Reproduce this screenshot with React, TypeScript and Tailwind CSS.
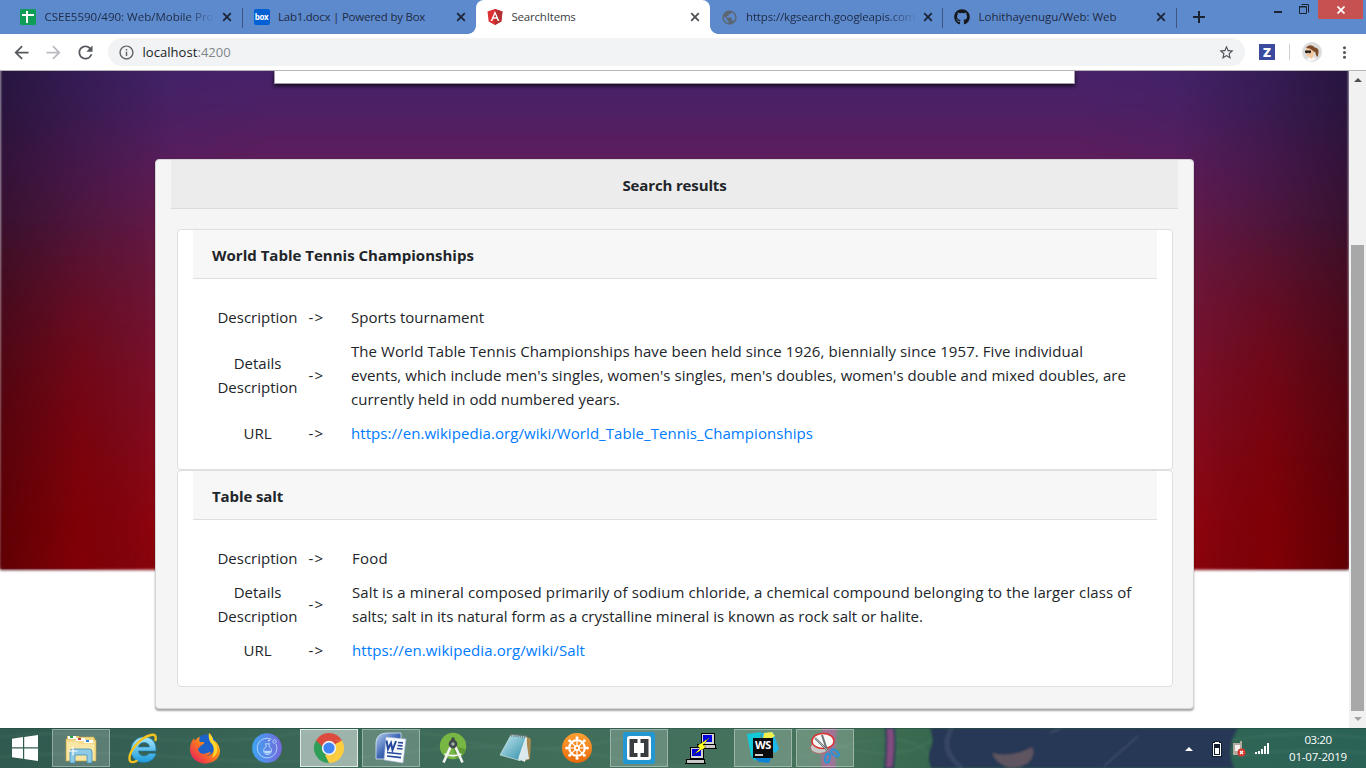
import React from "react";
import {
  MdArrowBack,
  MdArrowForward,
  MdRefresh,
  MdInfoOutline,
  MdStarBorder,
  MdMoreVert,
  MdPublic,
} from "react-icons/md";
import { FaGithub } from "react-icons/fa";

/* ---------- Browser tabs ---------- */

function CloseX({ className = "text-[#1f2a3c]" }: { className?: string }) {
  return (
    <svg viewBox="0 0 10 10" className={"size-[10px] shrink-0 " + className} stroke="currentColor" strokeWidth="1.8">
      <path d="M1.2 1.2 8.8 8.8M8.8 1.2 1.2 8.8" />
    </svg>
  );
}

function SheetsIcon() {
  return (
    <svg viewBox="0 0 16 16" className="size-4 shrink-0">
      <rect width="16" height="16" rx="1.2" fill="#0f9d58" />
      <path d="M2 6h12M7 2v12" stroke="#fff" strokeWidth="2" />
    </svg>
  );
}

function BoxIcon() {
  return (
    <span className="flex h-4 w-4 shrink-0 items-center justify-center rounded-[2px] bg-[#0061d5] font-['Open_Sans',sans-serif] text-[8px] leading-none font-bold tracking-[-0.3px] text-white">
      box
    </span>
  );
}

function AngularIcon() {
  return (
    <svg viewBox="0 0 16 16" className="size-4 shrink-0">
      <path d="M8 0 15.5 2.6 14.3 12.4 8 16 1.7 12.4.5 2.6Z" fill="#dd3136" />
      <path d="M8 0 15.5 2.6 14.3 12.4 8 16Z" fill="#b52e31" />
      <path d="M8 2 3.6 12h1.7l.9-2.3h3.6l.9 2.3h1.7ZM8 5l1.2 3.2H6.8Z" fill="#fff" fillRule="evenodd" />
    </svg>
  );
}

type TabProps = {
  icon: React.ReactNode;
  title: string;
  titleClass: string;
  active?: boolean;
  divider?: boolean;
};

function Tab({ icon, title, titleClass, active, divider }: TabProps) {
  return (
    <div
      className={
        "relative flex h-[34px] w-[233.5px] shrink-0 items-center pl-[11px] " +
        (active ? "rounded-t-[8px] bg-white pr-[9.5px]" : "pr-[10.5px]")
      }
    >
      {active && (
        <>
          <span className="absolute bottom-0 -left-2 h-2 w-2 bg-[radial-gradient(circle_at_0_0,transparent_7.5px,#fff_8px)]" />
          <span className="absolute -right-2 bottom-0 h-2 w-2 bg-[radial-gradient(circle_at_100%_0,transparent_7.5px,#fff_8px)]" />
        </>
      )}
      {icon}
      <span
        className={
          "-mr-1 ml-[8.5px] min-w-0 flex-1 overflow-hidden text-[11.5px] leading-4 whitespace-nowrap " +
          titleClass +
          (active ? " text-[#3c4043]" : " text-[#1d2b44]")
        }
      >
        {title}
      </span>
      <span className="flex w-5 justify-end">
        <CloseX className={active ? "text-[#4b4f54]" : "text-[#1b2536]"} />
      </span>
      {divider && <span className="absolute top-2 right-0 h-5 w-px bg-[#3c5581]" />}
    </div>
  );
}

function TabStrip() {
  return (
    <div className="flex h-[34px] bg-[#5d89cd] pl-[9px]">
      <Tab
        icon={<SheetsIcon />}
        title="CSEE5590/490: Web/Mobile Pro"
        titleClass="[mask-image:linear-gradient(to_right,#000_83%,transparent_99%)]"
        divider
      />
      <Tab icon={<BoxIcon />} title="Lab1.docx | Powered by Box" titleClass="tracking-[-0.24px]" />
      <Tab icon={<AngularIcon />} title="SearchItems" titleClass="tracking-[-0.2px]" active />
      <Tab
        icon={<MdPublic className="size-[17px] shrink-0 text-[#5c6670]" />}
        title="https://kgsearch.googleapis.com"
        titleClass="tracking-[-0.14px] [mask-image:linear-gradient(to_right,#000_83%,transparent_100%)]"
        divider
      />
      <Tab
        icon={<FaGithub className="size-4 shrink-0 text-[#15181c]" />}
        title="Lohithayenugu/Web: Web"
        titleClass="tracking-[-0.02px]"
        divider
      />
      <svg viewBox="0 0 12 12" className="mt-[11px] ml-4 size-3 shrink-0" stroke="#1b2230" strokeWidth="2">
        <path d="M6 0v12M0 6h12" />
      </svg>
      <div className="ml-auto flex h-[19px] shrink-0 pr-[3px]">
        <svg viewBox="0 0 50 19" className="h-[19px] w-[50px]" fill="none" stroke="#1b2230">
          <path d="M6 12h8" strokeWidth="2" />
          <path d="M31.5 6.5h7v7h-7zM31 7h8" />
          <path d="M33.5 4.5h7v8" />
        </svg>
        <div className="flex w-[45px] items-center justify-center bg-[#c75050]">
          <svg viewBox="0 0 8 8" className="size-2" stroke="#fff" strokeWidth="1.8">
            <path d="M.5.5l7 7M7.5.5l-7 7" />
          </svg>
        </div>
      </div>
    </div>
  );
}

/* ---------- Address bar ---------- */

function Avatar() {
  return (
    <svg viewBox="0 0 20 20" className="size-5">
      <circle cx="10" cy="10" r="10" fill="#dcdcdc" />
      <path d="M5 17c2-3 7-3 9 0a9 9 0 0 1-8 2Z" fill="#f8f8f8" />
      <path d="M4 7c0-2 4-3 7-2l1 7-2 5-3-2-2.500-2Z" fill="#f3c79e" />
      <path d="M4 6c2-4 7-3.500 8.500-.5 3 0 4.500 2.500 4 5-.2 2-.5 3-1 4.500-1-1-2-2.500-2-4.500L11 9C9.500 7 7 6 4 6Z" fill="#7d4b29" />
      <path d="M3 8.500h6v2c-1 1.200-2 1-2.500 0-1 1-3 .8-3.500-.2Z" fill="#241e1c" />
    </svg>
  );
}

function Toolbar() {
  return (
    <div className="flex h-9 items-center bg-white pr-[12px] pl-[11px]">
      <MdArrowBack className="size-[21px] shrink-0 text-[#54585d]" />
      <MdArrowForward className="ml-[11px] size-[21px] shrink-0 text-[#b9bbbe]" />
      <MdRefresh className="ml-[11px] size-[21px] shrink-0 text-[#54585d]" />
      <div className="ml-3 flex h-7 w-[1137px] shrink-0 items-center rounded-full bg-[#f1f3f4] pr-[10px] pl-[9.5px]">
        <MdInfoOutline className="size-[17px] text-[#5f6368]" />
        <span className="ml-2 text-[13px] leading-4 tracking-[0.05px] text-[#202124]">
          localhost<span className="text-[#80868b]">:4200</span>
        </span>
        <MdStarBorder className="ml-auto size-[17px] text-[#4f5358]" />
      </div>
      <span className="ml-[14px] flex size-4 items-center justify-center bg-[#3b4a9e] text-[13px] leading-none font-extrabold text-white">
        Z
      </span>
      <span className="ml-[14px] h-4 w-px bg-[#cfd1d4]" />
      <span className="ml-3 size-5">
        <Avatar />
      </span>
      <MdMoreVert className="ml-auto size-[19px] text-[#54585d]" />
    </div>
  );
}

/* ---------- Page ---------- */

type Line = { text: string; tracking: string };
type Result = { title: string; titleTracking: string; indent: string; description: Line; details: Line[]; url: Line };

const results: Result[] = [
  {
    title: "World Table Tennis Championships",
    titleTracking: "tracking-[0.01px]",
    indent: "pl-[21px]",
    description: { text: "Sports tournament", tracking: "tracking-normal" },
    details: [
      {
        text: "The World Table Tennis Championships have been held since 1926, biennially since 1957. Five individual",
        tracking: "tracking-[0.076px]",
      },
      {
        text: "events, which include men's singles, women's singles, men's doubles, women's double and mixed doubles, are",
        tracking: "tracking-[0.052px]",
      },
      { text: "currently held in odd numbered years.", tracking: "tracking-[0.015px]" },
    ],
    url: {
      text: "https://en.wikipedia.org/wiki/World_Table_Tennis_Championships",
      tracking: "tracking-[0.061px]",
    },
  },
  {
    title: "Table salt",
    titleTracking: "tracking-[-0.1px]",
    indent: "pl-[22px]",
    description: { text: "Food", tracking: "tracking-[0.2px]" },
    details: [
      {
        text: "Salt is a mineral composed primarily of sodium chloride, a chemical compound belonging to the larger class of",
        tracking: "tracking-[0.105px]",
      },
      {
        text: "salts; salt in its natural form as a crystalline mineral is known as rock salt or halite.",
        tracking: "tracking-[0.005px]",
      },
    ],
    url: { text: "https://en.wikipedia.org/wiki/Salt", tracking: "tracking-[0.097px]" },
  },
];

function Row({ label, indent, children }: { label: React.ReactNode; indent: string; children: React.ReactNode }) {
  return (
    <div className="flex items-center py-[5px] leading-6">
      <div className="w-[91px] text-center">{label}</div>
      <div className="w-[27px] text-center tracking-[1.3px]">-&gt;</div>
      <div className={"whitespace-nowrap " + indent}>{children}</div>
    </div>
  );
}

function ResultCard({ r }: { r: Result }) {
  return (
    <article className="rounded-[4px] border border-[#dfdfdf] bg-white px-[15px] pb-[19px]">
      <h2
        className={
          "border-b border-[#dfdfdf] bg-[#f7f7f7] px-[19px] pt-[13px] pb-[11px] leading-6 font-bold " + r.titleTracking
        }
      >
        {r.title}
      </h2>
      <div className="pt-[21px] pl-[19px]">
        <Row label="Description" indent={r.indent}>
          <span className={r.description.tracking}>{r.description.text}</span>
        </Row>
        <Row
          label={
            <>
              Details
              <br />
              Description
            </>
          }
          indent={r.indent}
        >
          {r.details.map((l) => (
            <span key={l.text} className={"block " + l.tracking}>
              {l.text}
            </span>
          ))}
        </Row>
        <Row label="URL" indent={r.indent}>
          <a className={"text-[#007bff] " + r.url.tracking}>{r.url.text}</a>
        </Row>
      </div>
    </article>
  );
}

function Page() {
  return (
    <div className="relative min-w-0 flex-1 overflow-hidden bg-white">
      <div className="absolute inset-x-0 -top-10 h-[539px] bg-[linear-gradient(to_right,rgba(0,0,0,.38),rgba(0,0,0,.18)_6%,transparent_13%,transparent_87%,rgba(0,0,0,.18)_94%,rgba(0,0,0,.38)),linear-gradient(to_right,rgba(30,32,90,.22),transparent_20%,transparent_80%,rgba(30,32,90,.22)),linear-gradient(to_bottom,#46226a_7%,#4c2065_14%,#5f1c5a_25%,#74173c_42%,#880f28_60%,#980712_80%,#a00006_92%,#9c0004)] blur-[1.5px]" />
      <div className="absolute inset-x-0 top-[150px] h-[348px] bg-[linear-gradient(to_right,#600004,#820006_6%,transparent_11%,transparent_89%,#820006_94%,#600004)] [mask-image:linear-gradient(to_bottom,transparent,#000)] blur-[1.5px]" />
      <div className="relative flex flex-col items-center">
        <div className="h-[13px] w-[801px] border border-t-0 border-[#a49aab] bg-white shadow-[0_2px_4px_rgba(0,0,0,.75)]" />
        <section className="mt-[75px] h-[550px] w-[1039px] rounded-[4px] border border-[#d5d5d5] bg-[#f5f5f5] px-[15px] shadow-[0_2px_2px_rgba(0,0,0,.35)]">
          <h1 className="border-b border-[#dcdcdc] bg-[#ececec] pt-[13px] pb-[11px] text-center leading-6 font-bold tracking-[-0.14px]">
            Search results
          </h1>
          <div className="pt-5 pr-[5px] pl-[6px]">
            {results.map((r) => (
              <ResultCard key={r.title} r={r} />
            ))}
          </div>
        </section>
      </div>
    </div>
  );
}

function Scrollbar() {
  return (
    <div className="flex w-[17px] shrink-0 flex-col items-center bg-[#f1f1f1]">
      <svg viewBox="0 0 8 4" className="mt-[7px] h-1 w-2">
        <path d="M0 4 4 0l4 4Z" fill="#505050" />
      </svg>
      <div className="mt-[163px] h-[466px] w-[13px] bg-[#a8a8a8]" />
      <svg viewBox="0 0 8 4" className="mt-[6px] h-1 w-2">
        <path d="M0 0h8L4 4Z" fill="#a3a3a3" />
      </svg>
    </div>
  );
}

/* ---------- Taskbar ---------- */

function TaskbarBackdrop() {
  return (
    <svg viewBox="0 0 1366 40" preserveAspectRatio="none" className="absolute inset-0 h-full w-full">
      <defs>
        <linearGradient id="tb" x1="0" x2="1" y1="0" y2="0">
          <stop offset="0" stopColor="#30594f" />
          <stop offset=".28" stopColor="#3c6a58" />
          <stop offset=".5" stopColor="#42705c" />
          <stop offset=".6" stopColor="#46745a" />
          <stop offset=".68" stopColor="#37694f" />
          <stop offset="1" stopColor="#2b6257" />
        </linearGradient>
        <filter id="soft">
          <feGaussianBlur stdDeviation="1.2" />
        </filter>
      </defs>
      <rect width="1366" height="40" fill="url(#tb)" />
      <g filter="url(#soft)">
        <g stroke="#5f8f7a" strokeOpacity=".2" strokeWidth="2" fill="none">
          <path d="M0 9Q60 2 140 10T300 5T460 12T640 6T820 11T940 6M0 29Q90 21 190 30T400 25T620 31T820 24T930 29" />
          <path d="M1230 13q60-12 136-3M1235 29q60-11 131-4" />
        </g>
        <path d="M822 0q0 20-1 40h15q-2-18 1-40Z" fill="#86527c" />
        <path d="M886 0q1 20-1 40h8q3-20 1-40Z" fill="#844b80" stroke="#2a3f58" strokeWidth="2" />
        <path d="M930 0q5 13 0 22-3 8 1 18h303q-3-6-4-16 1-14 8-24Z" fill="#273754" />
        <path d="M952 0q-14 22 10 40" stroke="#566789" strokeWidth="5" fill="none" opacity=".3" />
        <path d="M992 25q20 5 40-6 4 8-4 16-10 6-21 4-11-4-15-14Z" fill="#5e5560" />
        <path d="M1104 38l34-30M1050 5l12-5" stroke="#3a4966" strokeWidth="2" />
      </g>
      <path d="M0 .5h1366" stroke="#1e4440" strokeOpacity=".45" />
    </svg>
  );
}

function TaskButton({ state = "idle", children }: { state?: "idle" | "open" | "focused"; children: React.ReactNode }) {
  const look =
    state === "focused"
      ? " border border-[#e3ebe7] bg-white/50"
      : state === "open"
        ? " border border-white/35 bg-white/20"
        : "";
  return <div className={"flex h-[38px] w-[58px] items-center justify-center" + look}>{children}</div>;
}

const svgSize = "size-8";

function ExplorerIcon() {
  return (
    <svg viewBox="0 0 32 32" className={svgSize}>
      <path d="M2 4h12l1 2h15v23H2Z" fill="#e7c869" />
      <path d="M1 7h13l1-2h14v3h2v21H1Z" fill="#f4dc8c" stroke="#c9a74c" strokeWidth=".6" />
      <path d="M3 4h8v3H3ZM11 6h9v3h-9ZM19 8h9v3h-9Z" fill="#fff" />
      <path d="M5 4h3v2H5Z" fill="#21a346" />
      <path d="M13 6h3v2h-3Z" fill="#d13c2c" />
      <path d="M21 8h3v2h-3Z" fill="#2b86d3" />
      <path d="M2 10h10l2 2h15v16H2Z" fill="#f8e6a4" />
      <path d="M5 31V20q0-3 3-3h16q3 0 3 3v11h-5v-8H10v8Z" fill="#8fcbe6" stroke="#3f8db2" strokeWidth=".8" />
      <path d="M8 14.500v9M3.500 19h9" stroke="#fff" strokeWidth="1.200" />
    </svg>
  );
}

function IeIcon() {
  return (
    <svg viewBox="0 0 32 32" className={svgSize}>
      <defs>
        <linearGradient id="ie" x1="0" x2="0" y1="0" y2="1">
          <stop offset="0" stopColor="#a8e6fb" />
          <stop offset="1" stopColor="#1c9bdc" />
        </linearGradient>
      </defs>
      <path
        d="M17 5c8 0 12.500 5.500 12 14H11.500c.3 3.500 2.700 5 5.500 5 2.500 0 4-1 5-2.500h7C27.500 27 23 30.500 17 30.500 9 30.500 4 25 4 18S9.500 5 17 5Zm-5.500 10h11c-.2-3-2.500-4.500-5.300-4.500-3 0-5.300 1.500-5.700 4.500Z"
        fill="url(#ie)"
        stroke="#1a7fbd"
        strokeWidth=".6"
      />
      <path
        d="M28.500 8C29.500 4 28 2 24 3 13 5.500 2 19 2.500 27c.3 4 3.500 3.500 7 2"
        fill="none"
        stroke="#f3c320"
        strokeWidth="2.400"
        strokeLinecap="round"
      />
    </svg>
  );
}

function FirefoxIcon() {
  return (
    <svg viewBox="0 0 32 32" className={svgSize}>
      <defs>
        <linearGradient id="ff" x1="1" x2=".1" y1="0" y2="1">
          <stop offset="0" stopColor="#ffe226" />
          <stop offset=".45" stopColor="#ff8a16" />
          <stop offset="1" stopColor="#e8195f" />
        </linearGradient>
      </defs>
      <circle cx="17" cy="13" r="10.500" fill="#1d62c9" />
      <path
        d="M20 1c3 3 4 5 4 7 3 1 7 6 7 11 0 7-6.500 12.500-15 12.500S1 25 1 17c0-5 2-8 4-11l1 3c1-2 3-4 5-4-1 2-1 4 0 5h4c1 1-1 2.500-3 3.500-1 1-1 2-3 3 0 4 4 6 7 5 3-.5 4-2 6-1-2 3-5 4-8 3 7 2 12-3 11-9-.5-5-5-7-5-13.500Z"
        fill="url(#ff)"
      />
      <path d="M20 1c3 3 4 5 4 7 3 3 5 7 4 12-1 3-3 5-5 6 3-6 2-11 0-14-2-2-4-6-3-11Z" fill="#ffd62b" />
    </svg>
  );
}

function FlaskIcon() {
  return (
    <svg viewBox="0 0 32 32" className={svgSize}>
      <defs>
        <linearGradient id="fl" x1="0" x2="1" y1="0" y2="0">
          <stop offset="0" stopColor="#3fa4f2" />
          <stop offset="1" stopColor="#7568dc" />
        </linearGradient>
      </defs>
      <circle cx="16" cy="16" r="14.800" fill="url(#fl)" />
      <g fill="none" stroke="#b9dcfb" strokeWidth=".9">
        <path d="M20.500 7.300A9.800 9.800 0 1 0 25 12" />
        <circle cx="23.500" cy="9.500" r="1.700" />
        <path d="M15 12v3a4 4 0 1 0 3.200 0v-3M14 11.800h5.200" />
      </g>
      <path d="M13 18.700h7.200q-.5 3-3.600 3t-3.600-3Z" fill="#b9dcfb" />
      <circle cx="18" cy="8.500" r=".9" fill="#e4f2ff" />
    </svg>
  );
}

function ChromeIcon() {
  return (
    <svg viewBox="0 0 32 32" className={svgSize}>
      <path d="M16 16 3 8.500A15 15 0 0 1 29 8.500Z" fill="#dd4b3e" />
      <path d="M16 16 3 8.500A15 15 0 0 0 16 31Z" fill="#2f9e58" />
      <path d="M3 8.500 9.500 19.750 16 16Z" fill="#2f9e58" />
      <path d="M29 8.500A15 15 0 0 1 16 31l6.500-11.250V8.500Z" fill="#fdcd40" />
      <path d="M16 8.500h13L22 12Z" fill="#dd4b3e" />
      <path d="M22.500 19.750 16 31 12 23Z" fill="#fdcd40" />
      <path d="M3 8.500 16 8.500 10 15Z" fill="#dd4b3e" />
      <circle cx="16" cy="16" r="7.200" fill="#f3f3f3" />
      <circle cx="16" cy="16" r="5.600" fill="#4285f4" />
    </svg>
  );
}

function WordIcon() {
  return (
    <svg viewBox="0 0 32 32" className={svgSize}>
      <defs>
        <linearGradient id="wd" x1="0" x2="1" y1="0" y2="1">
          <stop offset="0" stopColor="#b9d1f1" />
          <stop offset=".5" stopColor="#3e67b5" />
          <stop offset="1" stopColor="#1f3f87" />
        </linearGradient>
      </defs>
      <path d="M1 10Q2 1 12 1h14v26H1Z" fill="url(#wd)" stroke="#dbe7f7" strokeWidth=".8" />
      <path d="M11 5 31 7 28 31 9 28Z" fill="#f7fafd" stroke="#9db4d8" strokeWidth=".6" />
      <path d="M11.500 8.500 13 17l3-6 1.500 7 3.500-9" fill="none" stroke="#25489b" strokeWidth="2" />
      <path d="M23 10.500l5 .4M22.500 13.500l5 .4M22 16.500l5.500.5M12 20.500l14.500 1.500M12 24l14 1.600" stroke="#25489b" strokeWidth="1.600" />
    </svg>
  );
}

function AndroidStudioIcon() {
  return (
    <svg viewBox="0 0 32 32" className={svgSize}>
      <circle cx="16" cy="14" r="13.200" fill="#78b743" />
      <path d="M16 14 29 17a13.200 13.200 0 0 1-10 10Z" fill="#5f9c38" />
      <path d="M14.500 9V5.500h3V9" fill="#394248" />
      <path d="M14 14 6.500 30.500M18 14 25.500 30.500" stroke="#f1f4f2" strokeWidth="2.600" />
      <path d="M7.500 22q8.500 3.500 17 0" fill="none" stroke="#f1f4f2" strokeWidth="1.800" />
      <circle cx="16" cy="12" r="4.400" fill="#41494d" />
      <circle cx="16" cy="12" r="1.700" fill="#9fb6a8" />
    </svg>
  );
}

function NotepadIcon() {
  return (
    <svg viewBox="0 0 32 32" className={svgSize}>
      <defs>
        <linearGradient id="np" x1="0" x2="1" y1="0" y2="1">
          <stop offset="0" stopColor="#c6eaf1" />
          <stop offset="1" stopColor="#2f8ea8" />
        </linearGradient>
      </defs>
      <path d="M27 4 32 7 31 27 26 29Z" fill="#a8894f" />
      <path d="M13 3 28 5 26 30 20 27Z" fill="#f1f6f7" />
      <path d="M12 3 27 5 19 28 1 23Z" fill="url(#np)" stroke="#e4f4f7" strokeWidth=".6" />
      <path d="M12 3 28 4.500" stroke="#6f7a7d" strokeWidth="3" strokeDasharray="1.200 1" />
      <path d="M27 6 30 27 19 29Z" fill="#dbe9ec" />
    </svg>
  );
}

function WheelIcon() {
  return (
    <svg viewBox="0 0 32 32" className={svgSize}>
      <defs>
        <linearGradient id="wh" x1="0" x2="0" y1="0" y2="1">
          <stop offset="0" stopColor="#ffa032" />
          <stop offset="1" stopColor="#ea6a0b" />
        </linearGradient>
      </defs>
      <circle cx="16" cy="16" r="15" fill="url(#wh)" />
      <g stroke="#fff" fill="none">
        <circle cx="16" cy="16" r="7.800" strokeWidth="2.200" />
        <circle cx="16" cy="16" r="2.200" strokeWidth="1.800" />
        <path
          d="M16 5.500v8M16 18.500v8M5.500 16h8M18.500 16h8M8.700 8.700l5.200 5.200M18.100 18.100l5.200 5.200M23.300 8.700l-5.200 5.200M13.900 18.100l-5.200 5.200"
          strokeWidth="1.200"
        />
      </g>
      <g fill="#fff">
        <circle cx="16" cy="5.700" r="1.500" />
        <circle cx="16" cy="26.300" r="1.500" />
        <circle cx="5.700" cy="16" r="1.500" />
        <circle cx="26.300" cy="16" r="1.500" />
        <circle cx="8.700" cy="8.700" r="1.500" />
        <circle cx="23.300" cy="8.700" r="1.500" />
        <circle cx="8.700" cy="23.300" r="1.500" />
        <circle cx="23.300" cy="23.300" r="1.500" />
      </g>
    </svg>
  );
}

function BracketsIcon() {
  return (
    <svg viewBox="0 0 32 32" className={svgSize}>
      <rect width="32" height="32" rx="2.500" fill="#2297d2" />
      <rect x="4" y="4" width="24" height="24" rx="2.500" fill="#fff" />
      <path d="M14.500 7v4h-3.500v10h3.500v4H6.500V7ZM17.500 7v4h3.500v10h-3.500v4h8V7Z" fill="#3a3d40" />
    </svg>
  );
}

function PuttyIcon() {
  return (
    <svg viewBox="0 0 32 32" className={svgSize} shapeRendering="crispEdges">
      <g stroke="#000">
        <path d="M16 1h13v11h-13Z" fill="#d4d4d4" />
        <path d="M13 12h17l1 4H12Z" fill="#c8c8c8" />
        <path d="M5 15h13v11H5Z" fill="#d4d4d4" />
        <path d="M2 27h17l1 4H1Z" fill="#c8c8c8" />
      </g>
      <path d="M18 3h9v7h-9ZM7 17h9v7H7Z" fill="#0000dd" />
      <path d="M24 6 12 14l3 2-7 7 13-8-3-2Z" fill="#ffff20" stroke="#555500" strokeWidth=".4" />
    </svg>
  );
}

function WebStormIcon() {
  return (
    <span className="relative size-8">
      <svg viewBox="0 0 32 32" className={svgSize}>
        <path d="M0 2 14 0l-3 24-3 5-4-5Z" fill="#13c9d6" />
        <path d="M14 1 26 0l6 17-4 4-12-9Z" fill="#1fb6e8" />
        <path d="M17 1 25 0l3 4-13 8Z" fill="#f4ef4b" />
        <path d="M5 24h20l-3 7-10-1Z" fill="#0d84d6" />
        <rect x="6" y="6" width="20" height="20" fill="#0b0b0b" />
        <path d="M8 23h8" stroke="#fff" strokeWidth="1.600" />
      </svg>
      <span className="absolute top-[7px] left-[6.5px] w-[19px] text-center text-[11px] leading-[12px] font-bold tracking-[-0.4px] text-white">
        WS
      </span>
    </span>
  );
}

function SnippingIcon() {
  return (
    <svg viewBox="0 0 32 32" className={svgSize}>
      <ellipse cx="10.500" cy="15.500" rx="9" ry="6" fill="#c4cac8" stroke="#b9625c" strokeWidth=".8" />
      <ellipse cx="14" cy="9" rx="11" ry="7.500" fill="#f6f7f7" stroke="#e02f2b" strokeWidth="1.400" />
      <path d="M6 6 19 19M13 3l5 15" stroke="#6b7175" strokeWidth="2" />
      <path d="M6 6 19 19" stroke="#b8bec2" strokeWidth=".8" />
      <g fill="none" stroke="#2c93d3" strokeWidth="2.200">
        <ellipse cx="18.500" cy="26" rx="2.300" ry="4.500" transform="rotate(12 18.500 26)" />
        <ellipse cx="26" cy="21" rx="2.300" ry="4.500" transform="rotate(-50 26 21)" />
      </g>
    </svg>
  );
}

function Taskbar() {
  return (
    <footer className="relative h-10 overflow-hidden">
      <TaskbarBackdrop />
      <div className="relative flex h-10 items-center">
        <div className="flex w-[52px] pl-3">
          <svg viewBox="0 0 26 26" className="size-[26px]" fill="#fff">
            <path d="M0 3.700 11 2.100V12.300H0ZM12.200 1.900 26 0v12.300H12.200ZM0 13.500h11v10.300L0 22.200ZM12.200 13.500H26V26l-13.800-2Z" />
          </svg>
        </div>
        <div className="flex gap-1">
          <TaskButton state="open"><ExplorerIcon /></TaskButton>
          <TaskButton><IeIcon /></TaskButton>
          <TaskButton><FirefoxIcon /></TaskButton>
          <TaskButton><FlaskIcon /></TaskButton>
          <TaskButton state="focused"><ChromeIcon /></TaskButton>
          <TaskButton state="open"><WordIcon /></TaskButton>
          <TaskButton><AndroidStudioIcon /></TaskButton>
          <TaskButton><NotepadIcon /></TaskButton>
          <TaskButton><WheelIcon /></TaskButton>
          <TaskButton state="open"><BracketsIcon /></TaskButton>
          <TaskButton><PuttyIcon /></TaskButton>
          <TaskButton state="open"><WebStormIcon /></TaskButton>
          <TaskButton state="open"><SnippingIcon /></TaskButton>
        </div>
        <div className="ml-auto flex items-center">
          <svg viewBox="0 0 8 4" className="mt-0.5 h-1 w-2">
            <path d="M0 4 4 0l4 4Z" fill="#fff" />
          </svg>
          <svg viewBox="0 0 10 16" className="mt-0.5 ml-[19px] h-4 w-[10px]" shapeRendering="crispEdges">
            <path d="M2 0h6v1h2v15H0V1h2Z" fill="#111c2c" />
            <path d="M3 1h4v1h2v13H1V2h2Z" fill="#fff" />
            <path d="M3 4h4v3H3ZM2 3h6v11H2Z" fill="#111c2c" />
            <path d="M3 7h4v6H3Z" fill="#fff" />
          </svg>
          <svg viewBox="0 0 14 17" className="ml-[10px] h-[17px] w-[14px]">
            <path d="M1 3h7V1h2v10H8v4H1Z" fill="#b3aaa0" />
            <path d="M3 5h5v6H3Z" fill="#f4f1ee" />
            <circle cx="9.500" cy="12.500" r="4" fill="#d8372f" />
            <path d="M8 11l3 3M11 11l-3 3" stroke="#fff" strokeWidth="1.200" />
          </svg>
          <svg viewBox="0 0 16 13" className="ml-2 h-[13px] w-4" fill="#fff" shapeRendering="crispEdges">
            <path d="M1 10h2v2H1ZM4 9h2v3H4ZM7 7h2v5H7ZM10 4h2v8h-2ZM13 1h2v11h-2Z" />
          </svg>
          <div className="mr-[18px] ml-[18px] w-[60px] text-center text-[11.5px] leading-[17px] tracking-[-0.22px] whitespace-nowrap text-white">
            <div className="tracking-[-0.45px]">03:20</div>
            <div>01-07-2019</div>
          </div>
        </div>
      </div>
    </footer>
  );
}

export default function App() {
  return (
    <div className="flex h-[768px] w-[1366px] flex-col overflow-hidden bg-white font-['Open_Sans','Noto_Sans',sans-serif] text-[15px] text-[#212529]">
      <TabStrip />
      <Toolbar />
      <div className="h-px bg-[#b5b5b5]" />
      <div className="flex min-h-0 flex-1">
        <Page />
        <Scrollbar />
      </div>
      <Taskbar />
    </div>
  );
}
